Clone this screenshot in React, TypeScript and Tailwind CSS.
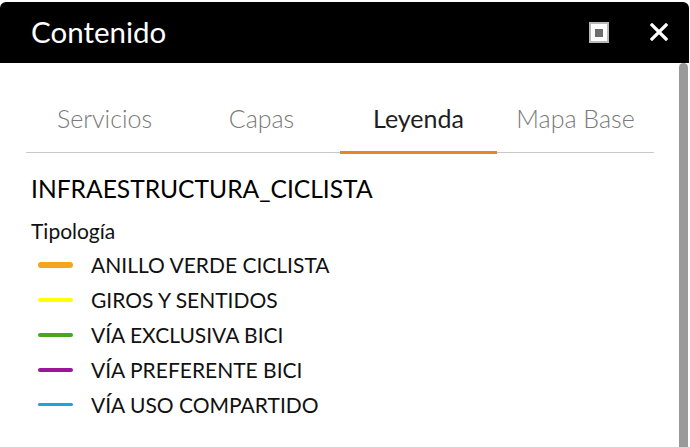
import React from "react";

const tabs = ["Servicios", "Capas", "Leyenda", "Mapa Base"];
const items = [
  { label: "ANILLO VERDE CICLISTA", color: "bg-[#f7a41d]", h: "h-[6px]" },
  { label: "GIROS Y SENTIDOS", color: "bg-[#ffff00]", h: "h-[4px]" },
  { label: "VÍA EXCLUSIVA BICI", color: "bg-[#4ca51e]", h: "h-[4px]" },
  { label: "VÍA PREFERENTE BICI", color: "bg-[#9b1795]", h: "h-[4px]" },
  { label: "VÍA USO COMPARTIDO", color: "bg-[#1ea3dc]", h: "h-[3px]" },
];

export default function App() {
  return (
    <div className="w-[690px] h-[447px] bg-white overflow-hidden flex flex-col font-['Lato',sans-serif]">
      <div className="mt-[2px] mr-[1px] h-[61px] shrink-0 bg-black rounded-t-[6px] flex items-center pl-[31px] pr-[21px]">
        <div className="text-white text-[29.5px] leading-none flex-1 pb-[2px]">Contenido</div>
        <div className="w-[20px] h-[21px] bg-white border-[2px] border-[#b8b8b8] flex items-center justify-center mr-[41px]">
          <div className="w-[8px] h-[8px] bg-[#6e6e6e]" />
        </div>
        <svg width="18" height="18" viewBox="0 0 18 18" className="mb-[1px]">
          <path d="M2 2 L16 16 M16 2 L2 16" stroke="white" strokeWidth="3.2" strokeLinecap="square" />
        </svg>
      </div>
      <div className="flex flex-1 min-h-0">
        <div className="flex-1 pl-[26px] pr-[25px]">
          <div className="flex border-b border-[#c8c8c8]">
            {tabs.map((t) => {
              const active = t === "Leyenda";
              return (
                <div key={t} className="relative flex-1 flex justify-center pt-[42px] pb-[20px]">
                  <span className={`text-[25px] leading-[27px] ${active ? "text-[#1e1e1e]" : "text-[#7a7a7a] font-light"}`}>{t}</span>
                  {active && <div className="absolute left-0 right-0 -bottom-[2px] h-[3px] bg-[#e4862a]" />}
                </div>
              );
            })}
          </div>
          <div className="pl-[5px] pt-[21px]">
            <div className="text-[24.6px] leading-[29px] text-black">INFRAESTRUCTURA_CICLISTA</div>
            <div className="mt-[16px] text-[21px] leading-[24px] text-[#111]">Tipología</div>
            <div className="mt-[4px] flex flex-col">
              {items.map((it) => (
                <div key={it.label} className="flex items-center h-[35px]">
                  <div className="w-[60px] flex justify-start pl-[7px]">
                    <div className={`w-[35px] rounded-full ${it.h} ${it.color}`} />
                  </div>
                  <span className="text-[21px] leading-[24px] text-[#111]">{it.label}</span>
                </div>
              ))}
            </div>
          </div>
        </div>
        <div className="w-[9px] mr-[2px] bg-[#9a9a9a] rounded-t-full" />
      </div>
    </div>
  );
}
